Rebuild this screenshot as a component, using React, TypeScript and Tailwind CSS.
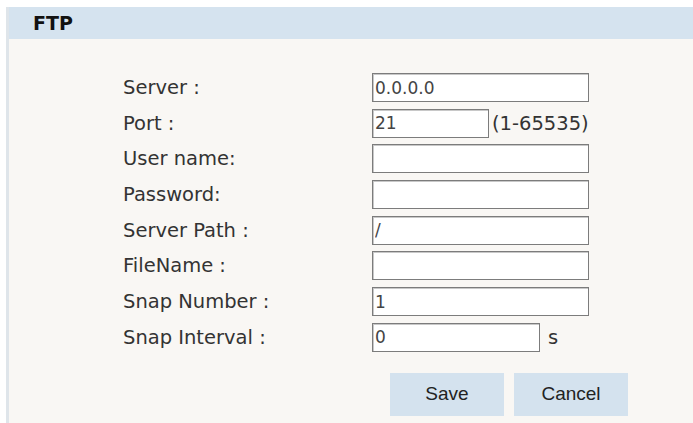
import React from 'react';

type Field = {
  label: string;
  value: string;
  width?: string;
  suffix?: string;
};

const fields: Field[] = [
  { label: 'Server :', value: '0.0.0.0' },
  { label: 'Port :', value: '21', width: 'w-[117px]', suffix: '(1-65535)' },
  { label: 'User name:', value: '' },
  { label: 'Password:', value: '' },
  { label: 'Server Path :', value: '/' },
  { label: 'FileName :', value: '' },
  { label: 'Snap Number :', value: '1' },
  { label: 'Snap Interval :', value: '0', width: 'w-[168px]', suffix: 's' },
];

const FtpSettings: React.FC = () => {
  return (
    <div className="w-full h-[423px] bg-white pt-[7px] pl-[6px]">
      <div className="h-full flex flex-col border-l-[3px] border-[#dfe5ea] bg-[#f9f7f4]">
        {/* Title bar */}
        <div className="h-[32px] shrink-0 bg-[#d5e3ef] flex items-center pl-[24px]">
          <span className="font-['DejaVu_Sans',sans-serif] font-bold text-[19px] text-[#111]">FTP</span>
        </div>

        {/* Form rows */}
        <div className="pt-[34px] pl-[114px] flex flex-col gap-[6.7px]">
          {fields.map((field) => (
            <div key={field.label} className="flex items-center h-[29px]">
              <span className="w-[249px] font-['DejaVu_Sans',sans-serif] text-[19.5px] text-[#333]">
                {field.label}
              </span>
              <input
                readOnly
                value={field.value}
                className={`${field.width ?? 'w-[217px]'} h-[29px] border border-[#7c7c7c] shadow-[inset_1px_1px_0_#c8c8c8] bg-white pl-[2px] font-['DejaVu_Sans',sans-serif] text-[17px] text-[#444] outline-none`}
              />
              {field.suffix && (
                <span
                  className={`${field.suffix === 's' ? 'ml-[8px]' : 'ml-[3px]'} font-['DejaVu_Sans',sans-serif] text-[19.5px] text-[#333]`}
                >
                  {field.suffix}
                </span>
              )}
            </div>
          ))}
        </div>

        {/* Actions */}
        <div className="pl-[381px] pt-[21px] flex gap-[10px]">
          <button className="w-[114px] h-[43px] bg-[#d4e2ee] font-['Liberation_Sans',sans-serif] text-[19px] text-[#222]">
            Save
          </button>
          <button className="w-[114px] h-[43px] bg-[#d4e2ee] font-['Liberation_Sans',sans-serif] text-[19px] text-[#222]">
            Cancel
          </button>
        </div>
      </div>
    </div>
  );
};

export default function App() {
  return <FtpSettings />;
}
